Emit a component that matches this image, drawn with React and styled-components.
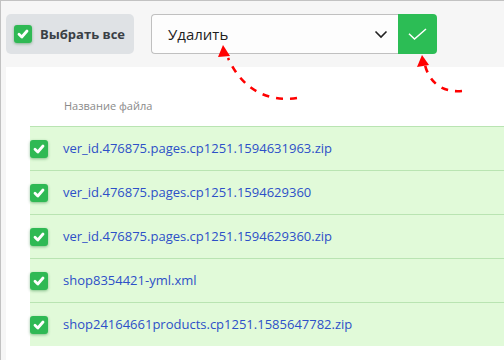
import React from "react";
import styled, { createGlobalStyle } from "styled-components";

const GlobalStyle = createGlobalStyle`
  html, body { margin: 0; padding: 0; background: #fff; }
  body { font-family: "Open Sans", "Noto Sans", sans-serif; }
`;

const files = [
  "ver_id.476875.pages.cp1251.1594631963.zip",
  "ver_id.476875.pages.cp1251.1594629360",
  "ver_id.476875.pages.cp1251.1594629360.zip",
  "shop8354421-yml.xml",
  "shop24164661products.cp1251.1585647782.zip",
];

// Frame with grey top/left edge
const Page = styled.div`
  position: relative;
  width: 504px;
  height: 360px;
  box-sizing: border-box;
  border-top: 1px solid #c2c2c2;
  border-left: 1px solid #c2c2c2;
  background: #f6f6f6;
  overflow: hidden;
`;

const Toolbar = styled.div`
  display: flex;
  align-items: center;
  padding: 10px 0 0 5px;
  height: 56px;
  box-sizing: border-box;
`;

const SelectAll = styled.button`
  display: flex;
  align-items: center;
  gap: 8px;
  width: 128px;
  height: 40px;
  padding: 0 0 0 8px;
  border: none;
  border-radius: 5px;
  background: #dfe2e5;
  font-family: inherit;
  font-size: 13px;
  font-weight: 700;
  color: #3a3f45;
`;

const Box = styled.span`
  display: inline-flex;
  align-items: center;
  justify-content: center;
  width: 18px;
  height: 18px;
  flex-shrink: 0;
  border-radius: 3px;
  background: #2fb954;
  box-shadow: 0 1px 3px rgba(20, 120, 40, 0.45);
`;

const Action = styled.div`
  display: flex;
  margin-left: 17px;
  height: 40px;
`;

const Select = styled.div`
  display: flex;
  align-items: center;
  justify-content: space-between;
  width: 247px;
  box-sizing: border-box;
  padding: 0 10px 0 16px;
  border: 1px solid #c0c0c0;
  border-right: none;
  border-radius: 4px 0 0 4px;
  background: #fdfdfd;
  font-size: 15px;
  color: #1e1e1e;
`;

const Apply = styled.button`
  display: flex;
  align-items: center;
  justify-content: center;
  width: 39px;
  border: none;
  padding: 0;
  border-radius: 0 4px 4px 0;
  background: #2cbd55;
`;

const Panel = styled.div`
  margin: 10px 0 0 5px;
  background: #fff;
  height: 300px;
  padding: 0 0 0 24px;
`;

const Header = styled.div`
  height: 59px;
  box-sizing: border-box;
  padding: 31px 0 0 34px;
  font-size: 11px;
  color: #8a8a8a;
`;

const Row = styled.div`
  display: flex;
  align-items: center;
  gap: 15px;
  height: 44px;
  box-sizing: border-box;
  border-top: 1px solid #b9e4b2;
  background: #e1fad9;
`;

const FileName = styled.a`
  font-size: 13px;
  color: #2d50c8;
  text-decoration: none;
  padding-bottom: 1px;
`;

const Arrows = styled.svg`
  position: absolute;
  left: 0;
  top: 0;
  pointer-events: none;
`;

function Check({ size = 12, color = "#fff", width = 2.8 }) {
  return (
    <svg width={size} height={size} viewBox="0 0 12 12">
      <path d="M2 6.3 L4.8 9 L10 3" fill="none" stroke={color} strokeWidth={width} strokeLinecap="round" strokeLinejoin="round" />
    </svg>
  );
}

export default function App() {
  return (
    <>
      <GlobalStyle />
      <Page>
        <Toolbar>
          <SelectAll>
            <Box><Check /></Box>
            Выбрать все
          </SelectAll>
          <Action>
            <Select>
              Удалить
              <svg width="14" height="9" viewBox="0 0 14 9">
                <path d="M1.5 1.5 L7 7 L12.5 1.5" fill="none" stroke="#222" strokeWidth="1.6" />
              </svg>
            </Select>
            <Apply>
              <svg width="19" height="12" viewBox="0 0 19 12">
                <path d="M1 5.8 L6.5 11 L18 1" fill="none" stroke="#fff" strokeWidth="1.5" />
              </svg>
            </Apply>
          </Action>
        </Toolbar>
        <Panel>
          <Header>Название файла</Header>
          {files.map((f) => (
            <Row key={f}>
              <Box><Check /></Box>
              <FileName href="#">{f}</FileName>
            </Row>
          ))}
        </Panel>
        <Arrows width="504" height="360" viewBox="0 0 504 360">
          <path d="M296 97 C 268 101, 242 90, 227 57" fill="none" stroke="#ff0000" strokeWidth="2.6" strokeDasharray="7 7" />
          <path d="M222 44 L 217 56 L 229 55 Z" fill="#ff0000" />
          <path d="M461 90 C 440 92, 428 80, 424 64" fill="none" stroke="#ff0000" strokeWidth="2.6" strokeDasharray="7 7" />
          <path d="M421 54 L 416 66 L 428 64 Z" fill="#ff0000" />
        </Arrows>
      </Page>
    </>
  );
}
